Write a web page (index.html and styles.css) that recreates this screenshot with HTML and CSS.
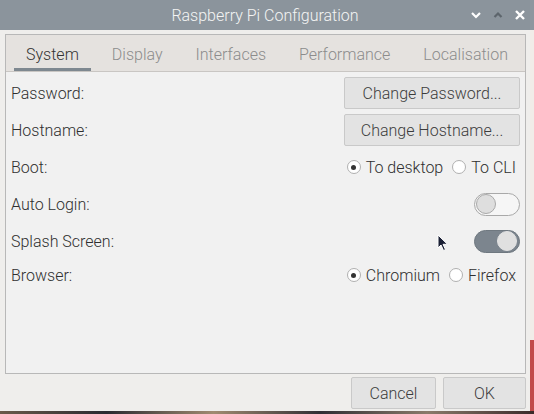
FILE: index.html
```html
<!DOCTYPE html>
<html>
<head>
<meta charset="utf-8">
<link rel="stylesheet" href="styles.css">
</head>
<body>
<div class="screen">
  <div class="window">
    <div class="titlebar">
      <div class="tb-spacer"></div>
      <div class="tb-title">Raspberry Pi Configuration</div>
      <div class="tb-controls">
        <svg class="tb-icon" width="12" height="10" viewBox="0 0 12 10"><path d="M2 3 L6 7 L10 3" fill="none" stroke="#ffffff" stroke-width="2.2"/></svg>
        <svg class="tb-icon" width="12" height="10" viewBox="0 0 12 10"><path d="M2.5 7 L6 3.5 L9.5 7" fill="none" stroke="#5d656c" stroke-width="2.2"/></svg>
        <svg class="tb-icon" width="12" height="12" viewBox="0 0 12 12"><path d="M2 2 L10 10 M10 2 L2 10" fill="none" stroke="#ffffff" stroke-width="2.4"/></svg>
      </div>
    </div>
    <div class="content">
      <div class="notebook">
        <div class="tabs">
          <div class="tab active">System</div>
          <div class="tab">Display</div>
          <div class="tab">Interfaces</div>
          <div class="tab">Performance</div>
          <div class="tab">Localisation</div>
        </div>
        <div class="page">
          <div class="row">
            <span class="label">Password:</span>
            <div class="btn wide">Change Password...</div>
          </div>
          <div class="row">
            <span class="label">Hostname:</span>
            <div class="btn wide">Change Hostname...</div>
          </div>
          <div class="row">
            <span class="label">Boot:</span>
            <div class="radios">
              <span class="radio checked"></span><span class="rlabel">To desktop</span>
              <span class="radio"></span><span class="rlabel">To CLI</span>
            </div>
          </div>
          <div class="row">
            <span class="label">Auto Login:</span>
            <span class="switch"><span class="knob"></span></span>
          </div>
          <div class="row">
            <span class="label">Splash Screen:</span>
            <span class="switch on"><span class="knob"></span></span>
          </div>
          <div class="row short">
            <span class="label">Browser:</span>
            <div class="radios">
              <span class="radio checked"></span><span class="rlabel">Chromium</span>
              <span class="radio"></span><span class="rlabel">Firefox</span>
            </div>
          </div>
        </div>
      </div>
      <div class="actions">
        <div class="btn cancel">Cancel</div>
        <div class="btn ok">OK</div>
      </div>
    </div>
    <svg class="cursor" width="12" height="18" viewBox="0 0 12 18"><path d="M1 1 L1 14 L4 11 L6.5 16.5 L8.5 15.6 L6 10.3 L10.5 10.3 Z" fill="#1b2035" stroke="#ffffff" stroke-width="1"/></svg>
  </div>
  <div class="desk-right"></div>
</div>
<div class="desk-bottom"></div>
</body>
</html>
```
FILE: styles.css
```css
html, body {
  margin: 0;
  padding: 0;
}
body {
  width: 534px;
  height: 414px;
  overflow: hidden;
  background: #3b3036;
  font-family: Roboto, "Liberation Sans", sans-serif;
  font-weight: 300;
  font-size: 16px;
  color: #2f2f2f;
}
.screen {
  display: flex;
  height: 411px;
}
.window {
  position: relative;
  width: 530px;
  height: 411px;
  background: #efeeec;
  display: flex;
  flex-direction: column;
}
.desk-right {
  width: 4px;
  background: linear-gradient(#8e979f 0 30px, #f1ece8 30px 340px, #c24a4a 340px);
}
.desk-bottom {
  height: 3px;
  background: linear-gradient(90deg, #6a5a4a, #2a2a30 20%, #a08a70 40%, #302e34 60%, #8a7a6a 80%, #3a2a2a);
}
.titlebar {
  height: 30px;
  background: #8b949c;
  display: grid;
  grid-template-columns: 1fr auto 1fr;
  align-items: center;
  color: #f4f4f4;
}
.tb-title {
  font-size: 16px;
  padding-top: 1px;
}
.tb-controls {
  display: flex;
  justify-content: flex-end;
  align-items: center;
  gap: 10px;
  padding-right: 4px;
}
.tb-icon {
  display: block;
}
.content {
  flex: 1;
  display: flex;
  flex-direction: column;
  padding: 4px 4px 2px 5px;
}
.notebook {
  height: 340px;
  border: 1px solid #b8b8b8;
  display: flex;
  flex-direction: column;
  box-sizing: border-box;
}
.tabs {
  height: 37px;
  box-sizing: border-box;
  background: #e5e2df;
  border-bottom: 1px solid #c9c6c3;
  display: flex;
  gap: 9px;
  padding-left: 8px;
}
.tab {
  padding: 6px 12px 0;
  display: flex;
  align-items: center;
  color: #8c8c8c;
  box-sizing: border-box;
  border-bottom: 3px solid transparent;
}
.tab.active {
  color: #333333;
  border-bottom-color: #7e8890;
}
.page {
  flex: 1;
  background: #f1f1f1;
  padding: 5px 5px 0 5px;
  display: flex;
  flex-direction: column;
  gap: 5px;
}
.row {
  height: 32px;
  display: flex;
  align-items: center;
  justify-content: space-between;
}
.row.short {
  height: 26px;
}
.label {
  color: #2f2f2f;
}
.btn {
  box-sizing: border-box;
  background: #e3e3e3;
  border: 1px solid #c9c9c9;
  border-radius: 2px;
  display: flex;
  align-items: center;
  justify-content: center;
  color: #3c3c3c;
}
.btn.wide {
  width: 176px;
  height: 32px;
}
.radios {
  display: flex;
  align-items: center;
  padding-right: 4px;
}
.radio {
  width: 14px;
  height: 14px;
  box-sizing: border-box;
  border: 1px solid #b0b0b0;
  border-radius: 50%;
  background: #ffffff;
  margin-right: 5px;
  display: flex;
  align-items: center;
  justify-content: center;
}
.radio.checked::after {
  content: "";
  width: 5px;
  height: 5px;
  border-radius: 50%;
  background: #333333;
}
.rlabel {
  margin-right: 9px;
}
.rlabel:last-child {
  margin-right: 0;
}
.switch {
  width: 46px;
  height: 23px;
  box-sizing: border-box;
  border: 1px solid #a9a9a9;
  border-radius: 12px;
  background: #f6f6f6;
  display: flex;
  align-items: center;
  padding: 0 1px;
}
.knob {
  width: 20px;
  height: 20px;
  box-sizing: border-box;
  border-radius: 50%;
  background: #dedede;
  border: 1px solid #a9a9a9;
}
.switch.on {
  background: #7c858e;
  border-color: #6f7880;
  justify-content: flex-end;
  padding: 0 2px;
}
.switch.on .knob {
  border-color: #e2e2e2;
  background: #e0e0e0;
}
.actions {
  display: flex;
  justify-content: flex-end;
  gap: 7px;
  padding-top: 3px;
}
.btn.cancel {
  width: 85px;
  height: 32px;
}
.btn.ok {
  width: 83px;
  height: 32px;
}
.cursor {
  position: absolute;
  left: 437px;
  top: 234px;
}
```
